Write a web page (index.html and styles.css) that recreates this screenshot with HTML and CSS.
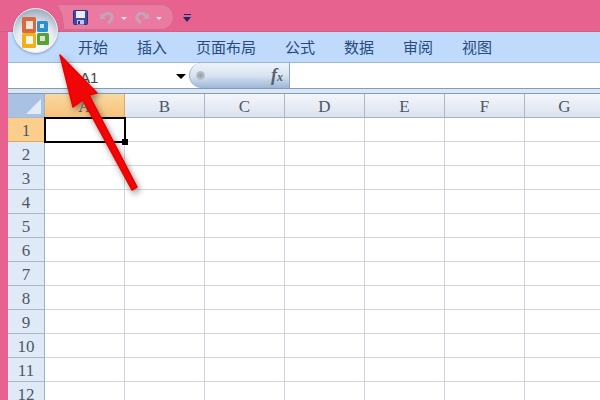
FILE: index.html
```html
<!DOCTYPE html>
<html>
<head>
  <meta charset="utf-8">
  <title>Excel</title>
  <link rel="stylesheet" href="styles.css">
</head>
<body>
  <div class="app">
    <!-- title bar with quick access toolbar -->
    <div class="titlebar">
      <div class="qat">
        <svg class="qat-shape" width="118" height="26" viewBox="0 0 118 26">
          <path d="M0.5 0.5H105a12.5 12.5 0 0 1 0 25H7.5C7.5 15 5 6 0.5 0.5Z" fill="#ea7aa0" stroke="#cf6a8e"/>
        </svg>
        <svg class="qat-save" width="15" height="15" viewBox="0 0 15 15">
          <rect x="0.5" y="0.5" width="14" height="14" rx="1" fill="#45469c" stroke="#2f3080"/>
          <rect x="3" y="1" width="9" height="7" fill="#e8ebf8"/>
          <rect x="4" y="10" width="7" height="4.5" fill="#c3c6e0"/>
          <rect x="5" y="11" width="2" height="3" fill="#2f3080"/>
        </svg>
        <svg class="qat-undo" width="14" height="14" viewBox="0 0 14 14">
          <path d="M3 7C4 3 10 2 12 6C13 9 11 11 8 13" fill="none" stroke="#c6a2b8" stroke-width="3"/>
          <path d="M0 3L6 9H0Z" fill="#c6a2b8"/>
        </svg>
        <span class="qat-caret"></span>
        <svg class="qat-redo" width="14" height="14" viewBox="0 0 14 14">
          <path d="M11 7C10 3 4 2 2 6C1 9 3 11 6 13" fill="none" stroke="#c6a2b8" stroke-width="3"/>
          <path d="M14 3L8 9H14Z" fill="#c6a2b8"/>
        </svg>
        <span class="qat-caret"></span>
      </div>
      <div class="qat-more"><span class="qat-more-line"></span><span class="qat-more-arrow"></span></div>
    </div>

    <div class="main">
      <div class="tabs">
        <span>开始</span>
        <span>插入</span>
        <span>页面布局</span>
        <span>公式</span>
        <span>数据</span>
        <span>审阅</span>
        <span>视图</span>
      </div>

      <div class="formula">
        <div class="namebox">
          <span class="cellname">A1</span>
          <span class="namearrow"></span>
        </div>
        <div class="fxbox">
          <span class="fxknob"></span>
          <span class="fxlabel">f<small>x</small></span>
        </div>
        <div class="fxinput"></div>
      </div>

      <table class="sheet">
        <tr class="colheads">
          <th class="corner"><span class="corner-mark"></span></th>
          <th class="on">A</th><th>B</th><th>C</th><th>D</th><th>E</th><th>F</th><th>G</th>
        </tr>
        <tr><th class="on">1</th><td class="active"></td><td></td><td></td><td></td><td></td><td></td><td></td></tr>
        <tr><th>2</th><td></td><td></td><td></td><td></td><td></td><td></td><td></td></tr>
        <tr><th>3</th><td></td><td></td><td></td><td></td><td></td><td></td><td></td></tr>
        <tr><th>4</th><td></td><td></td><td></td><td></td><td></td><td></td><td></td></tr>
        <tr><th>5</th><td></td><td></td><td></td><td></td><td></td><td></td><td></td></tr>
        <tr><th>6</th><td></td><td></td><td></td><td></td><td></td><td></td><td></td></tr>
        <tr><th>7</th><td></td><td></td><td></td><td></td><td></td><td></td><td></td></tr>
        <tr><th>8</th><td></td><td></td><td></td><td></td><td></td><td></td><td></td></tr>
        <tr><th>9</th><td></td><td></td><td></td><td></td><td></td><td></td><td></td></tr>
        <tr><th>10</th><td></td><td></td><td></td><td></td><td></td><td></td><td></td></tr>
        <tr><th>11</th><td></td><td></td><td></td><td></td><td></td><td></td><td></td></tr>
        <tr><th>12</th><td></td><td></td><td></td><td></td><td></td><td></td><td></td></tr>
      </table>
    </div>

    <!-- office button, sits over the title bar and tabs -->
    <div class="officebtn">
      <svg width="45" height="45" viewBox="0 0 45 45">
        <defs>
          <radialGradient id="orb" cx="50%" cy="80%" r="75%">
            <stop offset="0" stop-color="#ffffff"/>
            <stop offset="0.6" stop-color="#e6ebf1"/>
            <stop offset="1" stop-color="#a3b1c2"/>
          </radialGradient>
        </defs>
        <circle cx="22.5" cy="22.5" r="22" fill="url(#orb)" stroke="#eef1f5"/>
        <rect x="9" y="9" width="14" height="16" rx="1.5" fill="#d9683a"/>
        <rect x="13" y="13" width="7" height="8" fill="#f6e2d6"/>
        <rect x="24" y="13" width="11" height="11" rx="1.5" fill="#2f8fcb"/>
        <rect x="27" y="16" width="4" height="4" fill="#cfe6f2"/>
        <rect x="9" y="25" width="14" height="15" rx="1.5" fill="#f2b01e"/>
        <rect x="13" y="28" width="7" height="8" fill="#fdf6e0"/>
        <rect x="24" y="25" width="12" height="12" rx="1.5" fill="#58a038"/>
        <rect x="27" y="28" width="5" height="5" fill="#d5e8c8"/>
      </svg>
    </div>

    <!-- red annotation arrow -->
    <svg class="arrow" width="600" height="400" viewBox="0 0 600 400">
      <path d="M60 55L97 93L89 95L137 187L132 190L83 100L73 107Z" fill="#f00606" stroke="#e80000" stroke-width="1.5" stroke-linejoin="round"/>
    </svg>
  </div>
</body>
</html>
```

FILE: styles.css
```css
html, body {
  margin: 0;
  padding: 0;
}

.app {
  position: relative;
  width: 600px;
  height: 400px;
  overflow: hidden;
  background-color: #e8628f;
  font-family: "Liberation Sans", "Noto Sans CJK SC", sans-serif;
}

/* title bar */
.titlebar {
  display: flex;
  align-items: flex-start;
  height: 32px;
  padding: 4px 0 0 56px;
  box-sizing: border-box;
  border-bottom: 1px solid #c9648a;
}

.qat {
  position: relative;
  display: flex;
  align-items: center;
  width: 118px;
  height: 26px;
  padding-left: 17px;
  box-sizing: border-box;
}

.qat-shape {
  position: absolute;
  left: 0;
  top: 0;
}

.qat-save, .qat-undo, .qat-redo, .qat-caret {
  position: relative;
}

.qat-undo {
  margin-left: 12px;
}

.qat-redo {
  margin-left: 8px;
}

.qat-caret {
  width: 0;
  height: 0;
  margin: 3px 0 0 7px;
  border-left: 3px solid transparent;
  border-right: 3px solid transparent;
  border-top: 3px solid #f6dde6;
}

.qat-more {
  display: flex;
  flex-direction: column;
  align-items: center;
  margin: 10px 0 0 9px;
}

.qat-more-line {
  width: 7px;
  height: 1px;
  margin-bottom: 2px;
  background-color: #1f2a6b;
}

.qat-more-arrow {
  width: 0;
  height: 0;
  border-left: 4px solid transparent;
  border-right: 4px solid transparent;
  border-top: 5px solid #1f2a6b;
}

.main {
  width: 592px;
  margin-left: 8px;
  background-color: #dce6f2;
}

/* ribbon tabs */
.tabs {
  display: flex;
  gap: 29px;
  height: 31px;
  padding: 0 0 0 70px;
  box-sizing: border-box;
  background-color: #bfdafa;
  border-bottom: 1px solid #9db8d8;
  font-family: "Noto Sans CJK SC", sans-serif;
  font-size: 15px;
  line-height: 30px;
  color: #274a80;
}

/* formula bar */
.formula {
  display: flex;
  height: 26px;
  box-sizing: border-box;
  background-color: #ffffff;
  border-bottom: 1px solid #7f9db9;
}

.namebox {
  display: flex;
  align-items: center;
  width: 181px;
  padding: 3px 0 0 72px;
  box-sizing: border-box;
}

.cellname {
  font-size: 15px;
  color: #444444;
}

.namearrow {
  width: 0;
  height: 0;
  margin: 0 0 1px 78px;
  border-left: 5px solid transparent;
  border-right: 5px solid transparent;
  border-top: 5px solid #000000;
}

.fxbox {
  display: flex;
  align-items: center;
  justify-content: space-between;
  width: 101px;
  padding: 0 6px 0 6px;
  box-sizing: border-box;
  border-right: 1px solid #8aa4c2;
  border-left: 1px solid #9db3cc;
  border-radius: 13px 0 0 13px;
  background: linear-gradient(#eef3fa, #d9e4f1 50%, #9cb6d8);
}

.fxknob {
  width: 9px;
  height: 9px;
  border-radius: 50%;
  background: radial-gradient(#8f98a3, #d3dae3);
}

.fxlabel {
  font-family: "Liberation Serif", serif;
  font-size: 18px;
  font-style: italic;
  font-weight: bold;
  color: #55606e;
}

.fxlabel small {
  font-size: 12px;
}

.fxinput {
  flex: 1;
}

/* sheet */
.sheet {
  width: 597px;
  margin-top: 4px;
  border-collapse: separate;
  border-spacing: 0;
  table-layout: fixed;
  background-color: #ffffff;
  border-top: 1px solid #7f9db9;
  font-family: "Liberation Serif", serif;
}

.sheet th, .sheet td {
  width: 79px;
  height: 23px;
  padding: 0;
  border-right: 1px solid #ced5e1;
  border-bottom: 1px solid #ced5e1;
}

.sheet th {
  padding-top: 2px;
  height: 21px;
  font-size: 17px;
  font-weight: normal;
  color: #4a5868;
}

.colheads th {
  background: linear-gradient(#f3f6fb, #dce3ee);
  border-right-color: #a9b9cc;
  border-bottom-color: #9fb1c6;
}

.sheet tr > th:first-child {
  width: 36px;
  background: #e0eaf7;
  border-right-color: #9fb1c6;
  border-bottom-color: #a9b9cc;
}

.sheet .colheads .corner {
  position: relative;
  background: #a9c2e4;
}

.corner-mark {
  position: absolute;
  right: 3px;
  bottom: 3px;
  width: 0;
  height: 0;
  border-left: 15px solid transparent;
  border-bottom: 15px solid #e2ebf6;
}

.sheet .colheads .on {
  background: linear-gradient(#f9d99f, #f6c27c);
  border-right-color: #e0a860;
  border-bottom-color: #e0a860;
}

.sheet tr > th.on:first-child {
  background: #fbcf8b;
  border-right-color: #e0a860;
  border-bottom-color: #e0a860;
}

.sheet td.active {
  position: relative;
  outline: 2px solid #000000;
  outline-offset: -1px;
}

.sheet td.active::after {
  content: "";
  position: absolute;
  right: -4px;
  bottom: -4px;
  width: 6px;
  height: 6px;
  background-color: #000000;
}

/* overlays */
.officebtn {
  position: absolute;
  left: 13px;
  top: 8px;
  width: 45px;
  height: 45px;
  filter: drop-shadow(0 1px 1px rgba(90, 90, 120, 0.5));
}

.arrow {
  position: absolute;
  left: 0;
  top: 0;
  filter: drop-shadow(2px 3px 3px rgba(60, 40, 40, 0.55));
}
```
